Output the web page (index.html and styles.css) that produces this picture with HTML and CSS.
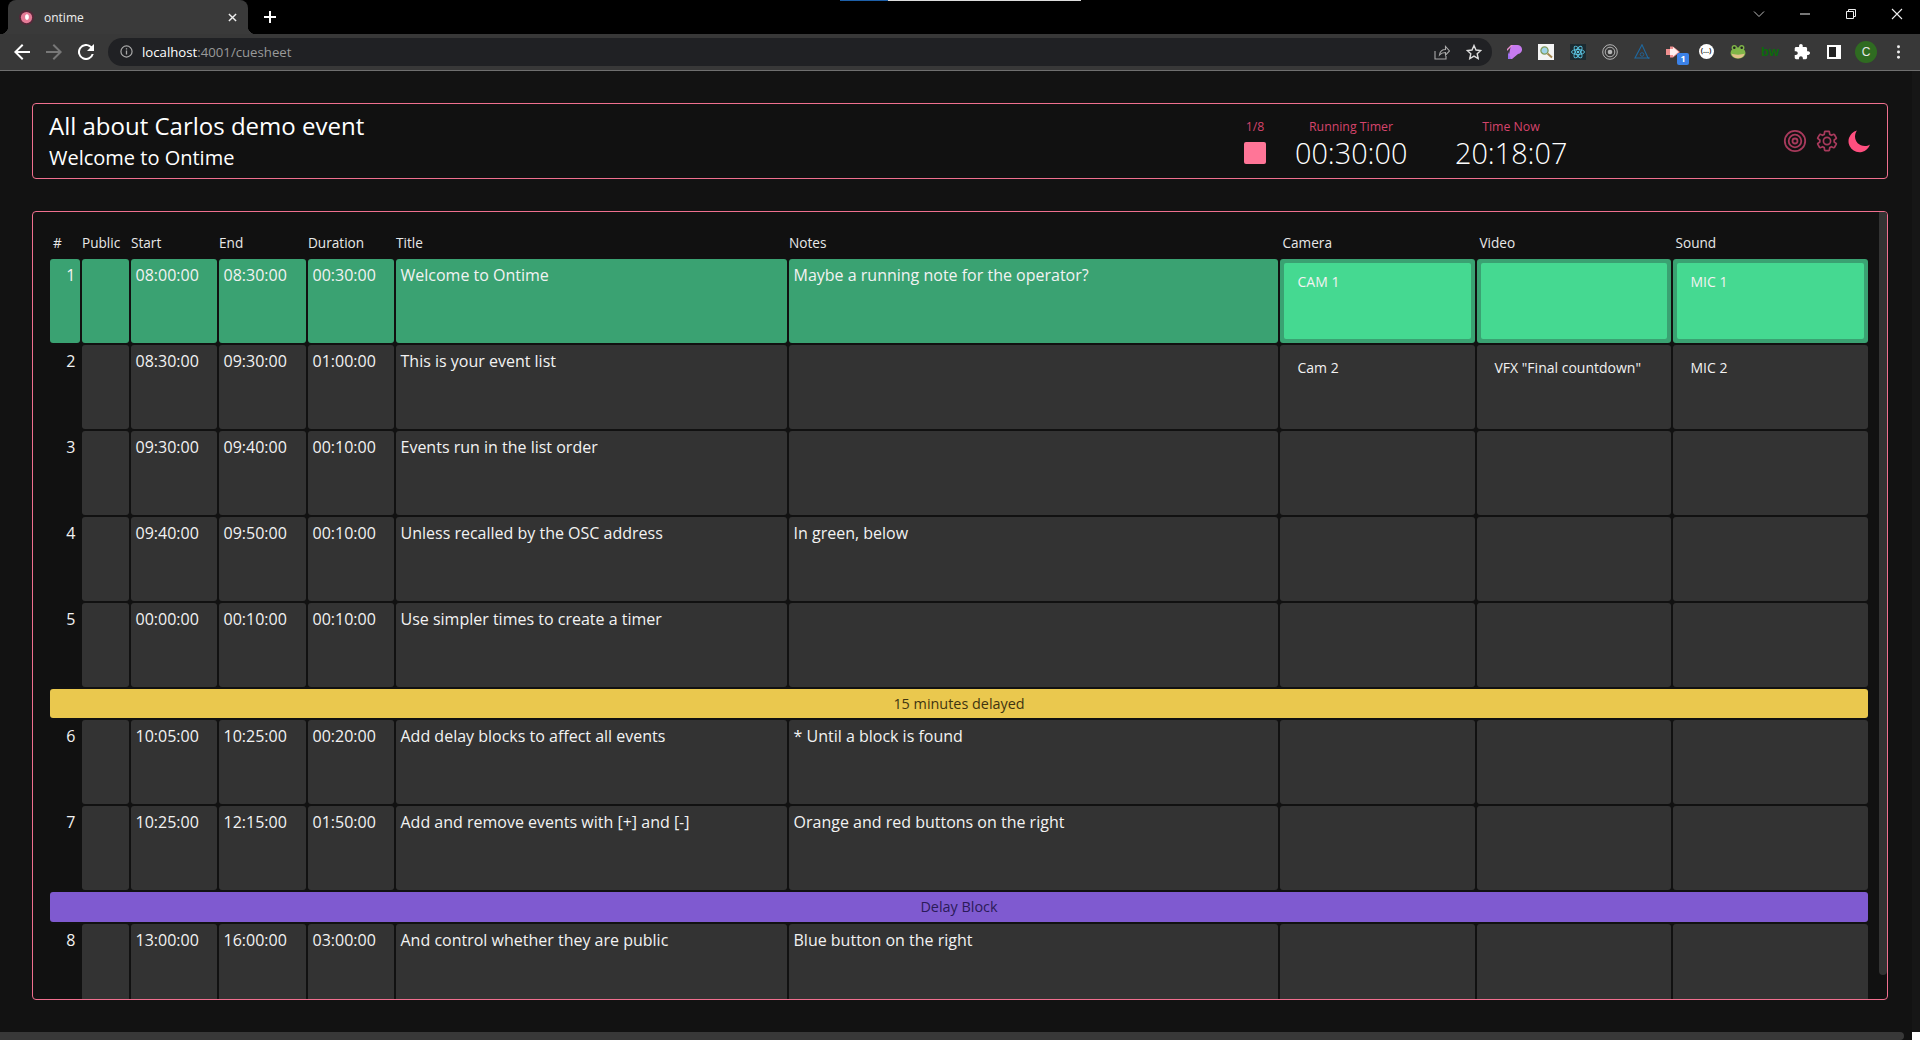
FILE: index.html
```html
<!DOCTYPE html>
<html lang="en">
<head>
    <meta charset="UTF-8">
    <title>ontime</title>
    <link rel="stylesheet" href="styles.css">
</head>
<body>
<div class="tabbar">
    <div class="loadbar"><span class="loadbar-blue"></span><span class="loadbar-white"></span></div>
    <div class="tab">
        <svg class="favicon" viewBox="0 0 16 16"><circle cx="8" cy="8" r="8" fill="#55293a"/><circle cx="8" cy="8" r="6" fill="#e57b97"/><ellipse cx="8.500" cy="7.500" rx="2" ry="3" fill="#fff"/></svg>
        <span class="tab-title">ontime</span>
        <svg class="tab-close" viewBox="0 0 10 10"><path d="M1 1l8 8M9 1l-8 8" stroke="#eee" stroke-width="1.600"/></svg>
    </div>
    <svg class="tab-new" viewBox="0 0 12 12"><path d="M6 0v12M0 6h12" stroke="#fff" stroke-width="2"/></svg>
    <div class="winctl">
        <svg class="winctl-chev" viewBox="0 0 12 8"><path d="M1 1.500l5 5 5-5" fill="none" stroke="#bbb"/></svg>
        <svg class="winctl-btn" viewBox="0 0 12 12"><path d="M1 6h10" stroke="#eee"/></svg>
        <svg class="winctl-btn" viewBox="0 0 12 12"><path d="M1.500 3.500h7v7h-7zM3.500 3.500v-2h7v7h-2" fill="none" stroke="#eee"/></svg>
        <svg class="winctl-btn" viewBox="0 0 12 12"><path d="M1 1l10 10M11 1L1 11" stroke="#eee" stroke-width="1.100"/></svg>
    </div>
</div>
<div class="toolbar">
    <svg class="nav-icon" viewBox="0 0 16 16"><path d="M16 7H3.800l5.600-5.600L8 0 0 8l8 8 1.400-1.400L3.800 9H16z" fill="#fff"/></svg>
    <svg class="nav-icon" viewBox="0 0 16 16"><path d="M0 7h12.200L6.600 1.400 8 0l8 8-8 8-1.400-1.400L12.200 9H0z" fill="#787878"/></svg>
    <svg class="nav-icon" viewBox="0 0 16 16"><path d="M13.650 2.350A8 8 0 1 0 15.730 10h-2.080A6 6 0 1 1 8 2c1.660 0 3.140.690 4.220 1.780L9 7h7V0z" fill="#fff"/></svg>
    <div class="omnibox">
        <svg class="omni-info" viewBox="0 0 14 14"><circle cx="7" cy="7" r="6" fill="none" stroke="#aaa" stroke-width="1.300"/><path d="M7 6v4.200M7 3.600v1.300" stroke="#aaa" stroke-width="1.400"/></svg>
        <span class="omni-url"><b>localhost</b>:4001/cuesheet</span>
        <svg class="omni-share" viewBox="0 0 16 16"><path d="M1 7v8h11v-3M5.500 11c.5-3.500 3-5.500 6-5.500V2.500L15.500 7l-4 4.200V8.500c-2.500 0-4.500.7-6 2.500z" fill="none" stroke="#aaa" stroke-width="1.100"/></svg>
        <svg class="omni-star" viewBox="0 0 16 16"><path d="M8 1.500l2 4.500 4.800.5-3.600 3.200 1 4.800L8 12.100l-4.200 2.400 1-4.800L1.200 6.500 6 6z" fill="none" stroke="#ddd" stroke-width="1.400"/></svg>
    </div>
    <div class="extensions">
        <span class="ext"><svg viewBox="0 0 16 16"><path d="M5 1h6a4.500 4.500 0 0 1 1 9L6 15H3.500l-1-2z" fill="#c77bf0"/><path d="M1 5l4-4h2L1 7z" fill="#e88fd0"/><path d="M2 8l3 7H2z" fill="#9a6ff0"/></svg></span>
        <span class="ext"><svg viewBox="0 0 16 16"><rect width="16" height="16" fill="#f4f4f4"/><circle cx="6.500" cy="6.500" r="3.600" fill="#9fd3e8" stroke="#7f9a5a" stroke-width="1.300"/><path d="M9.500 9.500l4.500 4" stroke="#a5874f" stroke-width="2"/></svg></span>
        <span class="ext"><svg viewBox="0 0 16 16"><rect width="16" height="16" fill="#1c2a30"/><g fill="none" stroke="#5cc8e6" stroke-width=".9"><ellipse cx="8" cy="8" rx="6.500" ry="2.500"/><ellipse cx="8" cy="8" rx="6.500" ry="2.500" transform="rotate(60 8 8)"/><ellipse cx="8" cy="8" rx="6.500" ry="2.500" transform="rotate(120 8 8)"/></g><circle cx="8" cy="8" r="1.300" fill="#5cc8e6"/></svg></span>
        <span class="ext"><svg viewBox="0 0 16 16"><g fill="none" stroke="#b5b5b5"><circle cx="8" cy="8" r="7.300"/><circle cx="8" cy="8" r="4.800"/></g><circle cx="8" cy="8" r="2.300" fill="#b5b5b5"/></svg></span>
        <span class="ext"><svg viewBox="0 0 16 16"><g fill="none" stroke="#1f689f"><path d="M8 .8L1 14h13z" stroke-width="1.100"/><path d="M14 14h1.500" stroke-width="1.500"/><circle cx="8" cy="10.500" r="1.800" stroke-width=".8"/></g></svg></span>
        <span class="ext ext-badged"><svg viewBox="0 0 16 16"><path d="M0 5h4V2.500h3L14 8l-7 5.500H4V11H0z" fill="#ef8f8f"/><path d="M4 5h3V3l5.500 5L7 12.500V11H4z" fill="#fff0f0"/></svg><span class="ext-badge">1</span></span>
        <span class="ext"><span class="ext-dots">(...)</span></span>
        <span class="ext"><svg viewBox="0 0 16 16"><ellipse cx="8" cy="9" rx="7.500" ry="5.800" fill="#7fb548"/><circle cx="4.300" cy="3.800" r="2.700" fill="#7fb548"/><circle cx="11.700" cy="3.800" r="2.700" fill="#7fb548"/><circle cx="4.300" cy="3.800" r="1.300" fill="#222"/><circle cx="11.700" cy="3.800" r="1.300" fill="#222"/><path d="M1.500 9.500c2 1.500 11 1.500 13 0-.5 3-3 4.800-6.500 4.800s-6-1.800-6.500-4.800z" fill="#e2c08a"/></svg></span>
        <span class="ext ext-bw">bw</span>
        <span class="ext"><svg viewBox="1 1 22 22"><path d="M20.500 11H19V7c0-1.100-.9-2-2-2h-4V3.500C13 2.120 11.880 1 10.500 1S8 2.120 8 3.500V5H4c-1.100 0-1.990.9-1.990 2v3.800H3.500c1.490 0 2.700 1.210 2.700 2.700s-1.210 2.700-2.700 2.700H2V20c0 1.100.9 2 2 2h3.800v-1.500c0-1.490 1.210-2.700 2.700-2.700 1.490 0 2.700 1.210 2.700 2.700V22H17c1.100 0 2-.9 2-2v-4h1.500c1.380 0 2.500-1.120 2.500-2.500S21.880 11 20.500 11z" fill="#fff"/></svg></span>
        <span class="ext"><span class="sidepanel"><span class="sidepanel-in"></span></span></span>
        <span class="ext"><span class="avatar">C</span></span>
        <span class="ext"><svg class="kebab" viewBox="0 0 4 16"><circle cx="2" cy="2" r="1.700" fill="#eee"/><circle cx="2" cy="8" r="1.700" fill="#eee"/><circle cx="2" cy="14" r="1.700" fill="#eee"/></svg></span>
    </div>
</div>

<div class="page">
    <div class="main">
        <div class="card header">
            <div class="titles">
                <div class="title">All about Carlos demo event</div>
                <div class="subtitle">Welcome to Ontime</div>
            </div>
            <div class="timers">
                <div class="timer timer-state">
                    <div class="timer-label">1/8</div>
                    <div class="stop-square"></div>
                </div>
                <div class="timer">
                    <div class="timer-label">Running Timer</div>
                    <div class="timer-value">00:30:00</div>
                </div>
                <div class="timer">
                    <div class="timer-label">Time Now</div>
                    <div class="timer-value">20:18:07</div>
                </div>
            </div>
            <div class="actions">
                <svg class="action" viewBox="0 0 24 24"><g fill="none" stroke="#a83a5c" stroke-width="1.800"><circle cx="12" cy="12" r="10.200"/><circle cx="12" cy="12" r="6.300"/><circle cx="12" cy="12" r="2.500"/></g></svg>
                <svg class="action" viewBox="0 0 24 24"><path d="M19.140 12.940c.04-.3.06-.61.06-.94 0-.32-.02-.64-.07-.94l2.030-1.580c.18-.14.23-.41.12-.61l-1.920-3.320c-.12-.22-.37-.29-.59-.22l-2.390.96c-.5-.38-1.030-.7-1.620-.94l-.36-2.540c-.04-.24-.24-.41-.48-.41h-3.840c-.24 0-.43.17-.47.41l-.36 2.540c-.59.24-1.130.57-1.620.94l-2.390-.96c-.22-.08-.47 0-.59.22L2.740 8.870c-.12.21-.08.47.12.61l2.030 1.580c-.05.3-.09.63-.09.94s.02.64.07.94l-2.030 1.580c-.18.14-.23.41-.12.61l1.920 3.320c.12.22.37.29.59.22l2.390-.96c.5.38 1.030.7 1.620.94l.36 2.540c.05.24.24.41.48.41h3.840c.24 0 .44-.17.47-.41l.36-2.540c.59-.24 1.130-.56 1.620-.94l2.390.96c.22.08.47 0 .59-.22l1.920-3.320c.12-.22.07-.47-.12-.61l-2.010-1.580zM12 15.600c-1.980 0-3.600-1.620-3.600-3.600s1.620-3.600 3.600-3.600 3.600 1.620 3.600 3.600-1.620 3.600-3.600 3.600z" fill="none" stroke="#a83a5c" stroke-width="1.700"/></svg>
                <svg class="action" viewBox="0 0 24 24"><path d="M10 1.500A11 11 0 1 0 23 15.500c-1.500 1-3.500 1.500-5 1.500-6 0-10-4.500-10-9.500 0-2 .8-4.500 2-6z" fill="#ff4f7f"/></svg>
            </div>
        </div>

        <div class="card sheet-card">
            <div class="sheet">
                <div class="row row-head">
                    <div class="head head-num">#</div>
                    <div class="head">Public</div>
                    <div class="head">Start</div>
                    <div class="head">End</div>
                    <div class="head">Duration</div>
                    <div class="head">Title</div>
                    <div class="head">Notes</div>
                    <div class="head head-res">Camera</div>
                    <div class="head head-res">Video</div>
                    <div class="head head-res">Sound</div>
                </div>

                <div class="row row-live">
                    <div class="cell cell-num">1</div>
                    <div class="cell"></div>
                    <div class="cell">08:00:00</div>
                    <div class="cell">08:30:00</div>
                    <div class="cell">00:30:00</div>
                    <div class="cell">Welcome to Ontime</div>
                    <div class="cell">Maybe a running note for the operator?</div>
                    <div class="cell cell-res"><div class="res">CAM 1</div></div>
                    <div class="cell cell-res"><div class="res"></div></div>
                    <div class="cell cell-res"><div class="res">MIC 1</div></div>
                </div>
                <div class="row">
                    <div class="cell cell-num">2</div>
                    <div class="cell"></div>
                    <div class="cell">08:30:00</div>
                    <div class="cell">09:30:00</div>
                    <div class="cell">01:00:00</div>
                    <div class="cell">This is your event list</div>
                    <div class="cell"></div>
                    <div class="cell cell-res"><div class="res">Cam 2</div></div>
                    <div class="cell cell-res"><div class="res">VFX "Final countdown"</div></div>
                    <div class="cell cell-res"><div class="res">MIC 2</div></div>
                </div>
                <div class="row">
                    <div class="cell cell-num">3</div>
                    <div class="cell"></div>
                    <div class="cell">09:30:00</div>
                    <div class="cell">09:40:00</div>
                    <div class="cell">00:10:00</div>
                    <div class="cell">Events run in the list order</div>
                    <div class="cell"></div>
                    <div class="cell"></div>
                    <div class="cell"></div>
                    <div class="cell"></div>
                </div>
                <div class="row">
                    <div class="cell cell-num">4</div>
                    <div class="cell"></div>
                    <div class="cell">09:40:00</div>
                    <div class="cell">09:50:00</div>
                    <div class="cell">00:10:00</div>
                    <div class="cell">Unless recalled by the OSC address</div>
                    <div class="cell">In green, below</div>
                    <div class="cell"></div>
                    <div class="cell"></div>
                    <div class="cell"></div>
                </div>
                <div class="row">
                    <div class="cell cell-num">5</div>
                    <div class="cell"></div>
                    <div class="cell">00:00:00</div>
                    <div class="cell">00:10:00</div>
                    <div class="cell">00:10:00</div>
                    <div class="cell">Use simpler times to create a timer</div>
                    <div class="cell"></div>
                    <div class="cell"></div>
                    <div class="cell"></div>
                    <div class="cell"></div>
                </div>

                <div class="band band-delay">15 minutes delayed</div>

                <div class="row">
                    <div class="cell cell-num">6</div>
                    <div class="cell"></div>
                    <div class="cell">10:05:00</div>
                    <div class="cell">10:25:00</div>
                    <div class="cell">00:20:00</div>
                    <div class="cell">Add delay blocks to affect all events</div>
                    <div class="cell">* Until a block is found</div>
                    <div class="cell"></div>
                    <div class="cell"></div>
                    <div class="cell"></div>
                </div>
                <div class="row">
                    <div class="cell cell-num">7</div>
                    <div class="cell"></div>
                    <div class="cell">10:25:00</div>
                    <div class="cell">12:15:00</div>
                    <div class="cell">01:50:00</div>
                    <div class="cell">Add and remove events with [+] and [-]</div>
                    <div class="cell">Orange and red buttons on the right</div>
                    <div class="cell"></div>
                    <div class="cell"></div>
                    <div class="cell"></div>
                </div>

                <div class="band band-block">Delay Block</div>

                <div class="row">
                    <div class="cell cell-num">8</div>
                    <div class="cell"></div>
                    <div class="cell">13:00:00</div>
                    <div class="cell">16:00:00</div>
                    <div class="cell">03:00:00</div>
                    <div class="cell">And control whether they are public</div>
                    <div class="cell">Blue button on the right</div>
                    <div class="cell"></div>
                    <div class="cell"></div>
                    <div class="cell"></div>
                </div>
            </div>
            <div class="vscroll"></div>
        </div>
    </div>
    <div class="page-track"></div>
</div>
<div class="hscroll-row">
    <div class="hscroll"></div>
    <div class="corner"></div>
</div>
</body>
</html>
```

FILE: styles.css
```css
* {
    margin: 0;
    padding: 0;
    box-sizing: border-box;
}

html, body {
    height: 100%;
}

body {
    display: flex;
    flex-direction: column;
    overflow: hidden;
    background-color: #121212;
    color: #fff;
    font-family: "Open Sans", "Noto Sans", sans-serif;
}

/* browser chrome */
.tabbar {
    position: relative;
    display: flex;
    align-items: flex-end;
    height: 34px;
    padding-left: 8px;
    background-color: #000;
}

.loadbar {
    position: absolute;
    left: 840px;
    top: 0;
    display: flex;
    height: 1px;
}

.loadbar-blue {
    width: 48px;
    background-color: #1d5fa8;
}

.loadbar-white {
    width: 193px;
    background-color: #ddd;
}

.tab {
    position: relative;
    display: flex;
    align-items: center;
    width: 240px;
    height: 34px;
    padding: 0 11px;
    border-radius: 8px 8px 0 0;
    background-color: #3a3a3a;
}

.tab::before,
.tab::after {
    content: "";
    position: absolute;
    bottom: 0;
    width: 8px;
    height: 8px;
}

.tab::before {
    left: -8px;
    background: radial-gradient(circle at 0 0, #000 8px, #3a3a3a 8.500px);
}

.tab::after {
    right: -8px;
    background: radial-gradient(circle at 100% 0, #000 8px, #3a3a3a 8.500px);
}

.favicon {
    width: 15px;
    height: 15px;
}

.tab-title {
    flex: 1;
    margin-left: 10px;
    font-size: 12px;
    color: #eee;
}

.tab-close {
    width: 9px;
    height: 9px;
}

.tab-new {
    width: 12px;
    height: 12px;
    margin: 0 0 11px 16px;
}

.winctl {
    display: flex;
    align-items: center;
    align-self: flex-start;
    margin-left: auto;
    height: 28px;
}

.winctl-chev {
    width: 12px;
    height: 8px;
    margin-right: 34px;
}

.winctl-btn {
    width: 12px;
    height: 12px;
    margin-right: 34px;
}

.winctl-btn:last-child {
    margin-right: 17px;
}

.toolbar {
    display: flex;
    align-items: center;
    height: 37px;
    padding: 0 0 1px 14px;
    border-bottom: 1px solid #6f6f6f;
    background-color: #383838;
}

.nav-icon {
    width: 16px;
    height: 16px;
    margin-right: 16px;
}

.omnibox {
    display: flex;
    align-items: center;
    width: 1384px;
    height: 28px;
    margin-left: -2px;
    padding: 0 12px;
    border-radius: 14px;
    background-color: #202124;
}

.omni-info {
    width: 13px;
    height: 13px;
}

.omni-url {
    flex: 1;
    margin-left: 9px;
    font-size: 13.200px;
    color: #9a9a9a;
}

.omni-url b {
    font-weight: 400;
    color: #fff;
}

.omni-share {
    width: 16px;
    height: 16px;
    margin-right: 16px;
}

.omni-star {
    width: 16px;
    height: 16px;
    margin-right: -2px;
}

.extensions {
    display: flex;
    align-items: center;
    margin-left: 6px;
}

.ext {
    position: relative;
    display: flex;
    align-items: center;
    justify-content: center;
    width: 32px;
    height: 24px;
}

.ext svg {
    width: 16px;
    height: 16px;
}

.ext .kebab {
    width: 5px;
    height: 14px;
}

.ext-badge {
    position: absolute;
    right: 1px;
    bottom: -1px;
    width: 12px;
    height: 12px;
    border-radius: 2px;
    background-color: #3b82e8;
    font-size: 9px;
    font-weight: 700;
    line-height: 12px;
    text-align: center;
}

.ext-dots {
    width: 15px;
    height: 15px;
    border-radius: 50%;
    background-color: #fff;
    color: #222;
    font-size: 7px;
    font-weight: 700;
    line-height: 14px;
    text-align: center;
}

.ext-bw {
    color: #0b6b0b;
    font-family: "Liberation Sans", sans-serif;
    font-size: 13px;
    font-weight: 700;
}

.sidepanel {
    display: block;
    width: 14px;
    height: 14px;
    padding: 2px 5px 2px 2px;
    background-color: #fff;
}

.sidepanel-in {
    display: block;
    width: 7px;
    height: 10px;
    background-color: #222;
}

.avatar {
    width: 22px;
    height: 22px;
    border-radius: 50%;
    background-color: #2f6b21;
    color: #e8e8e8;
    font-family: "Liberation Sans", sans-serif;
    font-size: 12px;
    line-height: 22px;
    text-align: center;
}

/* page */
.page {
    display: flex;
    flex: 1;
    min-height: 0;
}

.main {
    flex: 1;
    min-width: 0;
    padding: 32px 24px 32px 32px;
}

.page-track {
    width: 8px;
    background-color: #161616;
}

.card {
    border: 1px solid #f0708f;
    border-radius: 4px;
    background-color: #111;
}

.header {
    display: flex;
    align-items: center;
    height: 76px;
    padding: 0 16px;
}

.titles {
    flex: 1;
}

.title {
    font-size: 24px;
    line-height: 30px;
}

.subtitle {
    margin-top: 3px;
    font-size: 20px;
    line-height: 27px;
}

.timers {
    display: flex;
    align-self: flex-start;
    gap: 48px;
    margin: 14px 216px 0 0;
}

.timer {
    text-align: center;
}

.timer-state {
    margin-right: -19px;
}

.timer-label {
    font-size: 12.300px;
    line-height: 18px;
    color: #d5446c;
}

.timer-value {
    width: 112px;
    font-size: 28.800px;
    font-weight: 300;
    line-height: 34px;
}

.stop-square {
    width: 22px;
    height: 22px;
    margin-top: 6px;
    border-radius: 2px;
    background-color: #ff7597;
}

.actions {
    display: flex;
    gap: 8px;
}

.action {
    width: 24px;
    height: 24px;
}

/* cue sheet */
.sheet-card {
    display: flex;
    height: 789px;
    margin-top: 32px;
    padding-left: 17px;
    overflow: hidden;
}

.sheet {
    flex: none;
    width: 1818px;
}

.vscroll {
    flex: none;
    width: 8px;
    height: 763px;
    margin-left: 11px;
    border-radius: 0 0 4px 4px;
    background-color: #333;
}

.row {
    display: grid;
    grid-template-columns: 30px 47px 86px 87px 86px 391px 489px 195px 194px 195px;
    gap: 2px;
    height: 84px;
    margin-bottom: 2px;
}

.row-head {
    align-items: end;
    height: 47px;
    margin-bottom: 0;
    padding-bottom: 7px;
}

.head {
    font-size: 13.600px;
    line-height: 19px;
    color: #e8e8e8;
}

.head-num {
    padding-left: 3px;
}

.head-res {
    padding-left: 2.500px;
}

.cell {
    padding: 4px 4px 4px 4.500px;
    border-radius: 3px;
    background-color: #333;
    font-size: 16px;
    line-height: 24px;
    white-space: nowrap;
    color: #f2f2f2;
}

.cell-num {
    padding-right: 4.500px;
    background-color: transparent;
    text-align: right;
}

.cell-res {
    padding: 4px;
}

.res {
    height: 100%;
    padding: 9px 13.500px;
    border-radius: 2px;
    font-size: 14px;
    line-height: 20px;
}

.row-live .cell {
    background-color: #3aa272;
}

.row-live .res {
    background-color: #45d991;
}

.band {
    margin-bottom: 2px;
    border-radius: 3px;
    font-size: 14.400px;
    text-align: center;
}

.band-delay {
    height: 29px;
    line-height: 29px;
    background-color: #eac84e;
    color: #3f3510;
}

.band-block {
    height: 30px;
    line-height: 30px;
    background-color: #7f5ad0;
    color: #2b1b58;
}

.hscroll-row {
    display: flex;
    justify-content: space-between;
    flex: none;
    height: 8px;
}

.hscroll {
    width: 1904px;
    border-radius: 0 4px 4px 0;
    background-color: #383838;
}

.corner {
    width: 8px;
    background-color: #fff;
}
```
